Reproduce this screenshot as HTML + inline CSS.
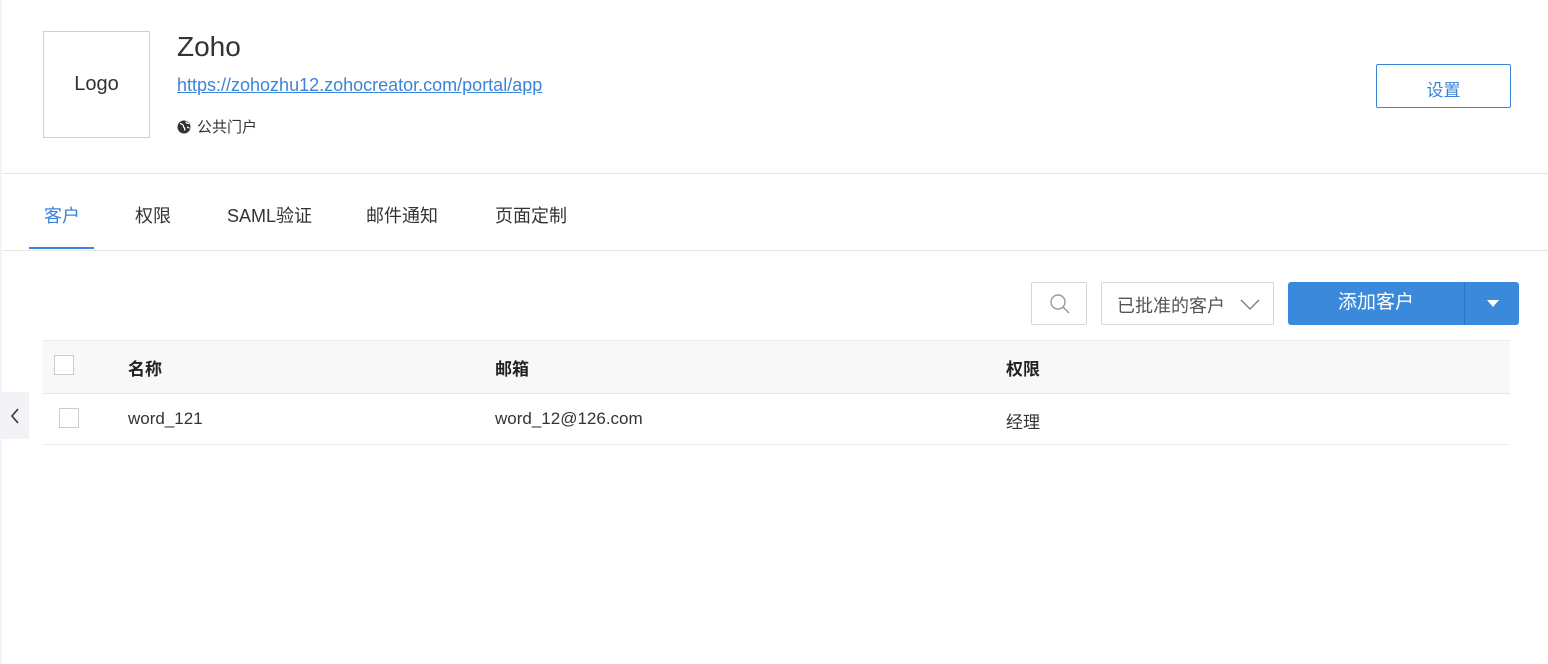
<!DOCTYPE html>
<html><head><meta charset="utf-8"><style>
*{box-sizing:border-box;margin:0;padding:0}
body{width:1548px;height:664px;background:#fff;font-family:"Liberation Sans","Noto Sans CJK SC",sans-serif;color:#333;position:relative;overflow:hidden}
.strip{position:absolute;left:0;top:0;width:2px;height:664px;background:#f2f3f7}
.abs{position:absolute}
.logo{left:43px;top:31px;width:107px;height:107px;border:1px solid #d0d0d0;display:flex;align-items:center;justify-content:center;font-size:20px;color:#333}
.title{left:177px;top:31px;font-size:28px;color:#333}
.url{left:177px;top:75px;font-size:18px;color:#3b84d9;text-decoration:underline}
.pub{left:177px;top:116px;font-size:15px;color:#333;display:flex;align-items:center;gap:6px}
.set{left:1376px;top:64px;width:135px;height:44px;border:1px solid #3b84d9;border-radius:2px;color:#3b84d9;font-size:17px;display:flex;align-items:center;justify-content:center;padding-top:4px}
.hr{left:2px;width:1546px;height:1px;background:#e6e6e6}
.tab{top:202px;font-size:18px;color:#333}
.tabline{left:29px;top:247px;width:65px;height:2px;background:#3b84d9}
.sbox{left:1031px;top:282px;width:56px;height:43px;border:1px solid #d6d6d6;border-radius:2px}
.filter{left:1101px;top:282px;width:173px;height:43px;border:1px solid #d6d6d6;border-radius:2px;font-size:18px;color:#555;padding:9px 0 0 15px}
.add{left:1288px;top:282px;width:231px;height:43px;background:#3b89da;border-radius:3px;color:#fff}
.thead{left:43px;top:340px;width:1467px;height:54px;background:#f8f8f8;border-top:1px solid #ececec;border-bottom:1px solid #e6e6e6}
.th{font-weight:bold;font-size:17px;color:#222;top:355px}
.td{font-size:17px;color:#333;top:409px}
.cb{width:20px;height:20px;border:1px solid #ccc;background:#fff}
.back{left:0;top:392px;width:29px;height:47px;background:#f2f3f7}
</style></head><body>
<div class="strip"></div>
<div class="abs logo">Logo</div>
<div class="abs title">Zoho</div>
<div class="abs url">https://zohozhu12.zohocreator.com/portal/app</div>
<div class="abs pub"><svg width="14" height="14" viewBox="0 0 14 14"><circle cx="7" cy="7" r="6.5" fill="#333"/><path d="M3 3.5c1.5 0 2 1 3 1.5s0 2 1 2.5 1 1.5.5 3M9 1.5c0 1.5 1.5 2 3 2M10 7c1 0 1.5 1 2.5 1" stroke="#fff" stroke-width="1.3" fill="none"/></svg>公共门户</div>
<div class="abs set">设置</div>
<div class="abs hr" style="top:173px"></div>
<div class="abs tab" style="left:44px;color:#3b84d9">客户</div>
<div class="abs tab" style="left:135px">权限</div>
<div class="abs tab" style="left:227px">SAML验证</div>
<div class="abs tab" style="left:366px">邮件通知</div>
<div class="abs tab" style="left:495px">页面定制</div>
<div class="abs tabline"></div>
<div class="abs hr" style="top:250px"></div>
<div class="abs sbox"><svg class="abs" style="left:17px;top:10px" width="22" height="22" viewBox="0 0 22 22"><circle cx="9" cy="9" r="7" stroke="#999" stroke-width="1.4" fill="none"/><path d="M14 14l6 6" stroke="#999" stroke-width="1.5"/></svg></div>
<div class="abs filter">已批准的客户<svg class="abs" style="left:138px;top:16px" width="20" height="12" viewBox="0 0 20 12"><path d="M1 1l9 9 9-9" stroke="#777" stroke-width="1.3" fill="none"/></svg></div>
<div class="abs add"><div class="abs" style="left:50px;top:5px;font-size:19px">添加客户</div><div class="abs" style="left:176px;top:0;width:1px;height:43px;background:#2f74c0"></div><svg class="abs" style="left:199px;top:18px" width="12" height="8" viewBox="0 0 12 8"><path d="M0 0h12L6 7z" fill="#fff"/></svg></div>
<div class="abs thead"></div>
<div class="abs cb" style="left:54px;top:355px"></div>
<div class="abs th" style="left:128px">名称</div>
<div class="abs th" style="left:495px">邮箱</div>
<div class="abs th" style="left:1006px">权限</div>
<div class="abs back"><svg class="abs" style="left:10px;top:16px" width="10" height="16" viewBox="0 0 10 16"><path d="M8 1L2 8l6 7" stroke="#333" stroke-width="1.6" fill="none"/></svg></div>
<div class="abs cb" style="left:59px;top:408px"></div>
<div class="abs td" style="left:128px">word_121</div>
<div class="abs td" style="left:495px">word_12@126.com</div>
<div class="abs td" style="left:1006px;top:408px">经理</div>
<div class="abs" style="left:43px;top:444px;width:1467px;height:1px;background:#ececec"></div>
</body></html>
